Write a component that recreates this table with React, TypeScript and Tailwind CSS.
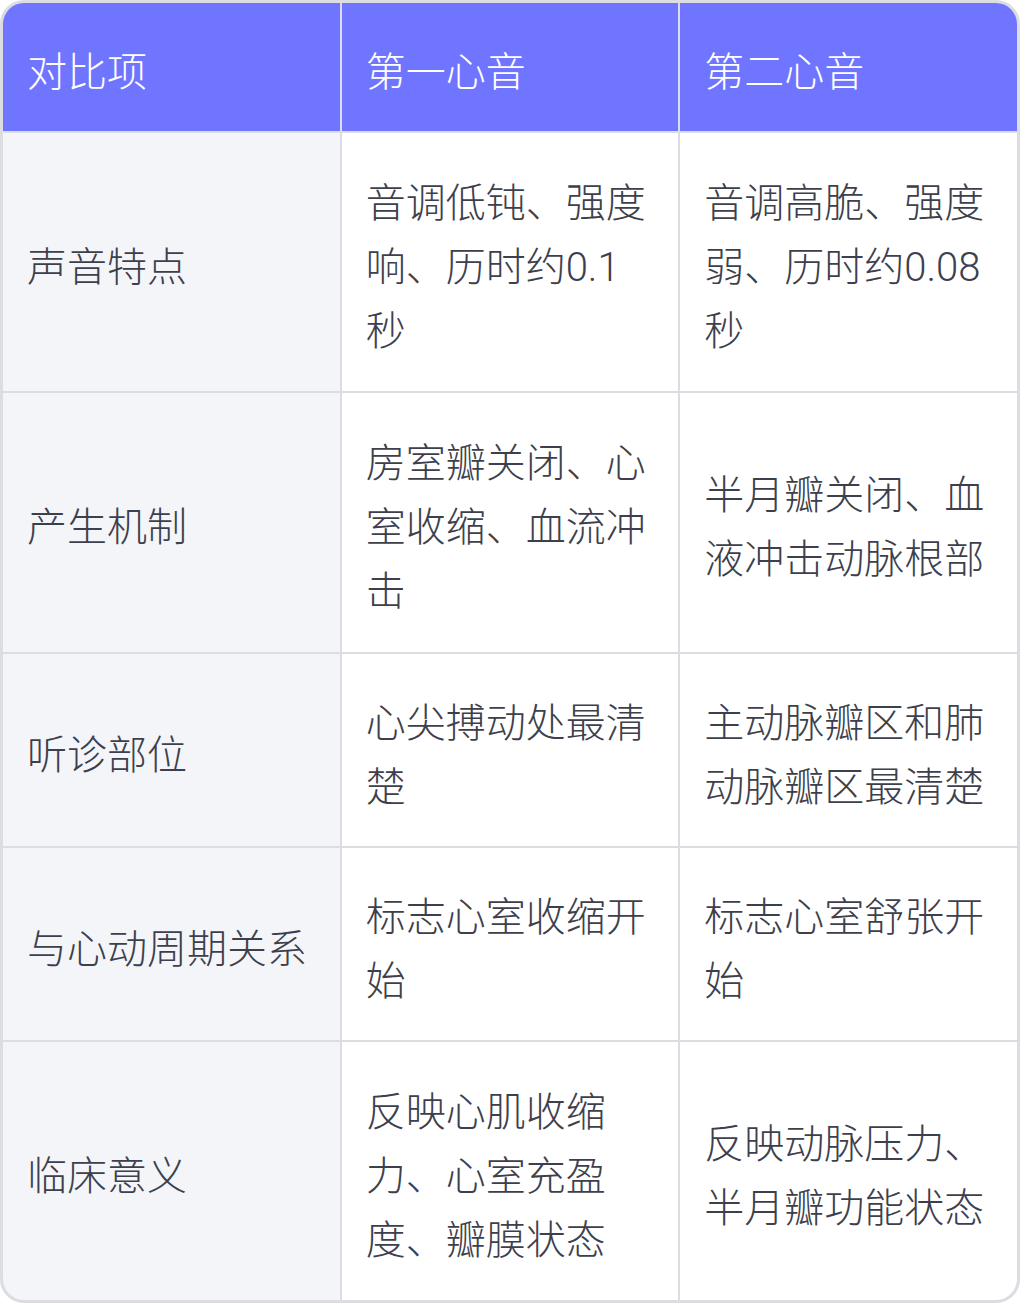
import React from "react";

const header = ["对比项", "第一心音", "第二心音"];
const rows: string[][] = [
  ["声音特点", "音调低钝、强度响、历时约0.1秒", "音调高脆、强度弱、历时约0.08秒"],
  ["产生机制", "房室瓣关闭、心室收缩、血流冲击", "半月瓣关闭、血液冲击动脉根部"],
  ["听诊部位", "心尖搏动处最清楚", "主动脉瓣区和肺动脉瓣区最清楚"],
  ["与心动周期关系", "标志心室收缩开始", "标志心室舒张开始"],
  ["临床意义", "反映心肌收缩力、心室充盈度、瓣膜状态", "反映动脉压力、半月瓣功能状态"],
];

export default function App() {
  return (
    <div
      className="w-[1020px] h-[1303px] bg-white"
      style={{ fontFamily: 'Roboto, "Noto Sans CJK SC", sans-serif' }}
    >
      <div className="w-full h-full border-[3px] border-[#dcdde3] rounded-[24px] overflow-hidden bg-[#dcdde3] grid grid-cols-3 gap-[2px] grid-rows-[128px_1fr_1fr_auto_auto_1fr]">
        {header.map((h) => (
          <div
            key={h}
            className="bg-[#7075ff] text-white text-[40px] leading-[64px] font-light px-6 pt-3 flex items-center"
          >
            {h}
          </div>
        ))}
        {rows.map((r, i) =>
          r.map((c, j) => (
            <div
              key={`${i}-${j}`}
              className={`${j === 0 ? "bg-[#f4f5f9]" : "bg-white"} text-[#3d404c] text-[40px] leading-[64px] font-light px-6 pt-[38px] pb-[26px] flex items-center break-all`}
            >
              <span>{c}</span>
            </div>
          ))
        )}
      </div>
    </div>
  );
}
